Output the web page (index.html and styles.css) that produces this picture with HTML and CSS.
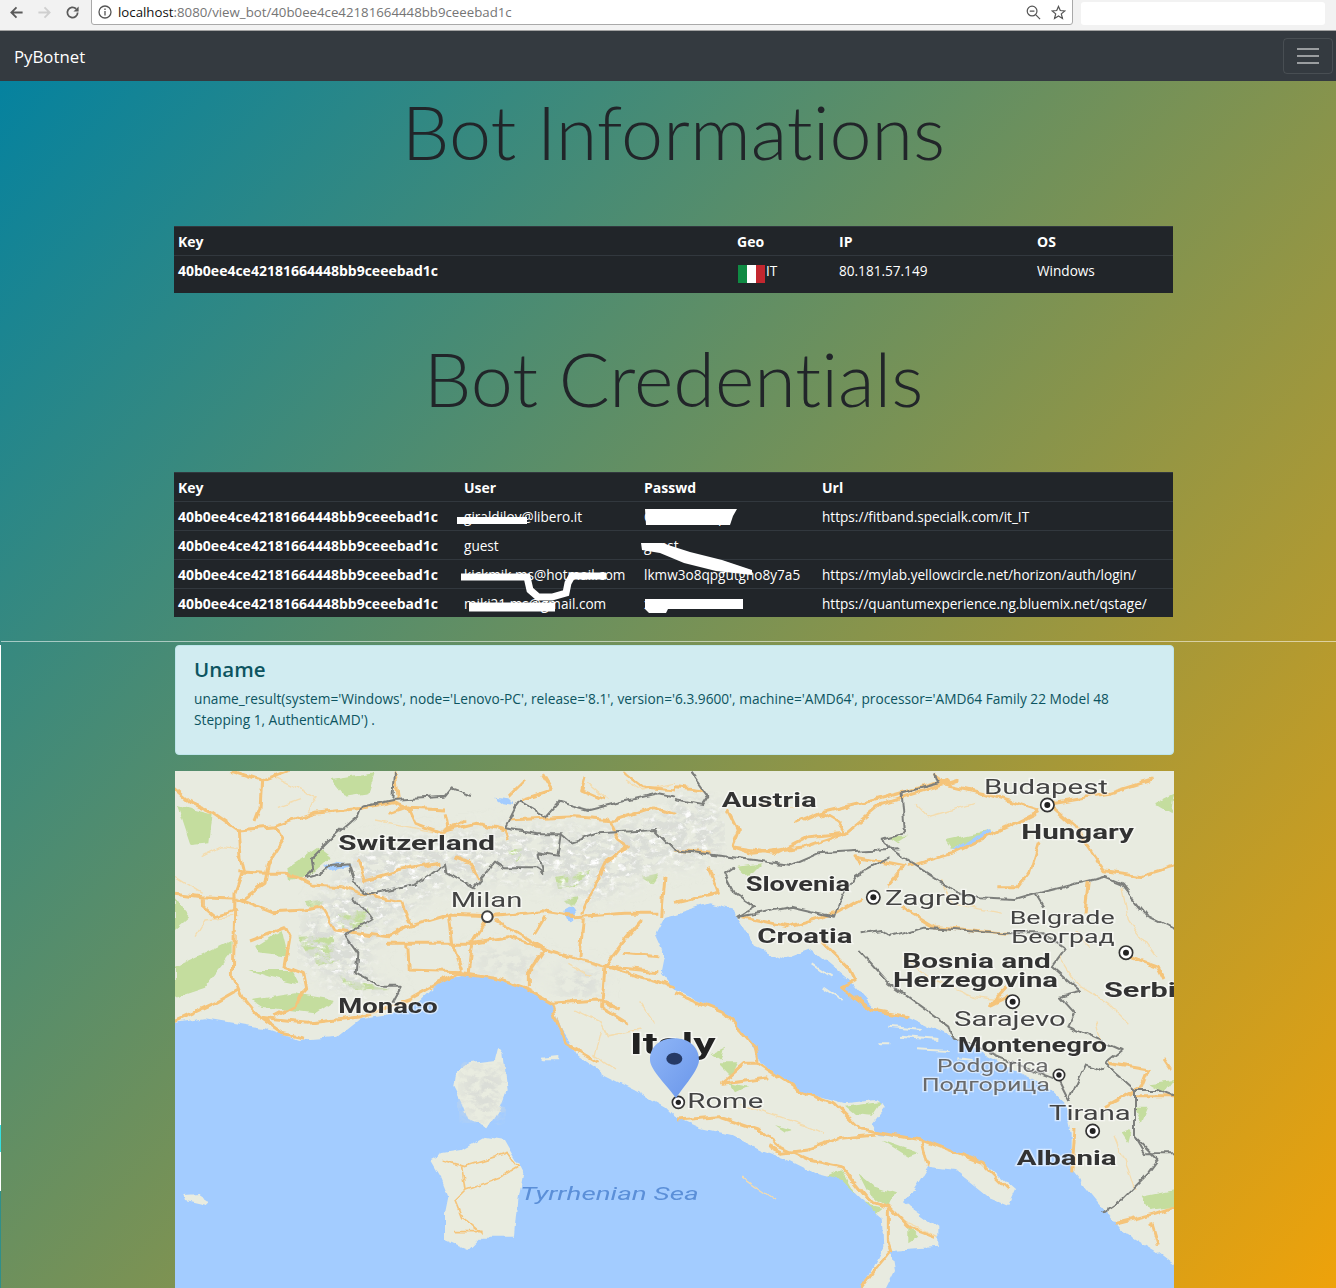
FILE: index.html
```html
<!DOCTYPE html>
<html lang="en">
<head>
<meta charset="utf-8">
<title>PyBotnet</title>
<link rel="stylesheet" href="styles.css">
</head>
<body>
<header class="chrome">
  <div class="nav-icons">
    <svg class="ic" viewBox="0 0 16 16"><path class="st-dark" d="M14.500 8H2.500M8 2.500 2.500 8 8 13.500"/></svg>
    <svg class="ic" viewBox="0 0 16 16"><path class="st-light" d="M1.500 8H13.500M8 2.500 13.500 8 8 13.500"/></svg>
    <svg class="ic" viewBox="0 0 16 16"><path class="st-dark" d="M13.500 8A5.500 5.500 0 1 1 11.800 4"/><path class="fill-dark" d="M14.500 1.500V7H9Z"/></svg>
  </div>
  <div class="urlbar">
    <svg class="ic-info" viewBox="0 0 14 14"><circle class="st-thin" cx="7" cy="7" r="6"/><path class="st-thin" d="M7 6V10.500M7 3.500V5"/></svg>
    <span class="url"><span class="host">localhost</span>:8080/view_bot/40b0ee4ce42181664448bb9ceeebad1c</span>
    <svg class="ic-end" viewBox="0 0 16 16"><circle class="st-thin" cx="6.500" cy="6.500" r="5.200"/><path class="st-thin" d="M4 6.500H9M10.500 10.500 15 15"/></svg>
    <svg class="ic-end" viewBox="0 0 16 16"><path class="st-thin" d="M8 1.500 9.900 5.900 14.700 6.300 11 9.500 12.200 14.300 8 11.700 3.800 14.300 5 9.500 1.300 6.300 6.100 5.900Z"/></svg>
  </div>
  <div class="profile-mask"></div>
</header>

<nav class="navbar">
  <a class="brand">PyBotnet</a>
  <button class="toggler" type="button" aria-label="Toggle navigation"><span></span><span></span><span></span></button>
</nav>

<main class="page">
  <div class="wrap">
    <h1 class="title">Bot Informations</h1>
    <table class="dark info">
      <thead><tr><th class="c1a">Key</th><th class="c1b">Geo</th><th class="c1c">IP</th><th class="c1d">OS</th></tr></thead>
      <tbody><tr class="tall"><th>40b0ee4ce42181664448bb9ceeebad1c</th><td><svg class="flag" viewBox="0 0 27 18"><rect class="fl-g" width="9" height="18"/><rect class="fl-w" x="9" width="9" height="18"/><rect class="fl-r" x="18" width="9" height="18"/></svg>IT</td><td>80.181.57.149</td><td>Windows</td></tr></tbody>
    </table>
    <h1 class="title second">Bot Credentials</h1>
    <div class="table-wrap">
      <table class="dark creds">
        <thead><tr><th class="c2a">Key</th><th class="c2b">User</th><th class="c2c">Passwd</th><th class="c2d">Url</th></tr></thead>
        <tbody>
          <tr><th>40b0ee4ce42181664448bb9ceeebad1c</th><td>giraldilov@libero.it</td><td>Gxxxxxxxxxp</td><td>https://fitband.specialk.com/it_IT</td></tr>
          <tr><th>40b0ee4ce42181664448bb9ceeebad1c</th><td>guest</td><td>guest</td><td></td></tr>
          <tr><th>40b0ee4ce42181664448bb9ceeebad1c</th><td>kickmik.ms@hotmail.com</td><td>lkmw3o8qpgutgho8y7a5</td><td>https://mylab.yellowcircle.net/horizon/auth/login/</td></tr>
          <tr><th>40b0ee4ce42181664448bb9ceeebad1c</th><td>miki21.ms@gmail.com</td><td>xxxxxxxxxxxx</td><td>https://quantumexperience.ng.bluemix.net/qstage/</td></tr>
        </tbody>
      </table>
      <svg class="scribbles" viewBox="174 472 999 145">
        <path class="sc w7" d="M457 520.500H527"/>
        <path class="sc-f" d="M645 509H737L733 516 730 525H646Z"/>
        <path class="sc-f" d="M641 543 662 543 690 552 722 560 752 570 752 575 716 571 684 563 660 553 642 550Z"/>
        <path class="sc w7" d="M461 577H527L530 590 538 597 552 597 566 593 568 583 572 576H606"/>
        <path class="sc w8" d="M469 607H555"/>
        <path class="sc-f" d="M645 599H743V609H668L666 613H649L645 609Z"/>
      </svg>
    </div>
  </div>
  <hr class="rule">
  <div class="lower">
    <div class="wrap">
      <section class="alert">
        <h4>Uname</h4>
        <p>uname_result(system='Windows', node='Lenovo-PC', release='8.1', version='6.3.9600', machine='AMD64', processor='AMD64 Family 22 Model 48 Stepping 1, AuthenticAMD') .</p>
      </section>
      <svg class="map" viewBox="0 3 2997 1551">
        <defs>
          <filter id="terrain" x="0" y="0" width="100%" height="100%">
            <feGaussianBlur in="SourceAlpha" stdDeviation="28" result="soft"/>
            <feTurbulence type="fractalNoise" baseFrequency=".03 .05" numOctaves="4" seed="4"/>
            <feColorMatrix type="matrix" values="0 0 0 0 .70  0 0 0 0 .72  0 0 0 0 .68  5 0 0 0 -1.900"/>
            <feComposite in2="soft" operator="in"/>
          </filter>
          <filter id="ridge" x="0" y="0" width="100%" height="100%">
            <feGaussianBlur in="SourceAlpha" stdDeviation="28" result="soft"/>
            <feTurbulence type="fractalNoise" baseFrequency=".04 .07" numOctaves="4" seed="19"/>
            <feColorMatrix type="matrix" values="0 0 0 0 1  0 0 0 0 1  0 0 0 0 1  4 0 0 0 -2.200"/>
            <feComposite in2="soft" operator="in"/>
          </filter>
          <filter id="wig" x="-3%" y="-3%" width="106%" height="106%">
            <feTurbulence type="fractalNoise" baseFrequency=".022" numOctaves="3" seed="7" result="n"/>
            <feDisplacementMap in="SourceGraphic" in2="n" scale="22" xChannelSelector="R" yChannelSelector="G"/>
            <feGaussianBlur stdDeviation="2.200"/>
          </filter>
          <linearGradient id="pinfill" x1="0" y1="0" x2="1" y2="1">
            <stop offset="0" stop-color="#8fb6f7"/><stop offset="1" stop-color="#6a96ea"/>
          </linearGradient>
        </defs>
        <rect class="land" y="0" width="3000" height="1560"/>
        <g filter="url(#wig)">
          <g class="green">
            <path d="M10 105 110 130 100 220 50 225Z"/><path d="M0 385 45 440 0 480Z"/><path d="M0 590 170 510 170 550 90 650 0 680Z"/>
            <path d="M340 290 430 230 470 260 400 320 345 330Z"/><path d="M470 30 600 10 580 70 510 80Z"/><path d="M240 530 320 480 340 560 250 550Z"/>
            <path d="M370 500 470 495 490 570 430 590Z"/><path d="M480 440 580 420 580 470 500 480Z"/><path d="M490 620 560 640 640 660 540 665Z"/>
            <path d="M230 690 360 670 480 690 420 730 260 710Z"/><path d="M220 600 350 600 370 640 280 620Z"/><path d="M390 400 450 390 420 420Z"/>
            <path d="M1140 320 1250 300 1220 340 1150 360Z"/><path d="M1170 390 1210 380 1190 410Z"/><path d="M990 240 1050 235 1020 280Z"/><path d="M1400 320 1450 310 1430 340Z"/>
            <path d="M1690 290 1760 280 1720 320Z"/><path d="M2140 200 2200 200 2170 220Z"/><path d="M2310 210 2450 180 2330 240Z"/><path d="M2940 100 3000 70 2990 130Z"/>
            <path d="M1610 850 1650 830 1640 870Z"/><path d="M1630 880 1690 880 1670 920Z"/><path d="M1660 940 1720 950 1680 970Z"/>
            <path d="M1800 1065 1850 1080 1830 1085Z"/><path d="M2120 1110 2230 1150 2200 1160Z"/><path d="M2010 1010 2120 995 2090 1040 2040 1035Z"/>
            <path d="M1940 1230 2000 1200 2040 1270 1970 1275 1920 1240Z"/><path d="M2050 1210 2100 1250 2160 1270 2140 1310 2080 1270Z"/><path d="M2070 1300 2120 1310 2090 1335Z"/>
            <path d="M2200 1370 2230 1400 2200 1420Z"/><path d="M2900 1280 3000 1260 3000 1310 2920 1320Z"/><path d="M2880 1010 2920 1010 2900 1060Z"/><path d="M2840 1090 2870 1080 2860 1120Z"/><path d="M2920 940 3000 930 2970 970Z"/>
          </g>
          <g filter="url(#terrain)">
            <path d="M560 230 800 200 1000 180 1300 180 1500 110 1500 260 1350 350 1250 400 1100 330 900 330 800 350 700 420 620 480 560 600 680 680 500 660 370 560 370 480 470 350 520 290Z"/>
            <path d="M900 540 1100 560 1060 620 900 590Z"/><path d="M1150 600 1280 600 1270 680 1150 680Z"/>
            <path d="M1500 60 1640 110 1650 240 1500 300Z"/>
          </g>
          <g filter="url(#ridge)">
            <path d="M560 230 800 200 1000 180 1300 180 1500 110 1500 260 1350 350 1250 400 1100 330 900 330 800 350 700 420 620 480 560 600 680 680 500 660 370 560 370 480 470 350 520 290Z"/>
            <path d="M1500 60 1640 110 1650 240 1500 300Z"/>
          </g>
          <g class="sea">
            <path d="M-20 762 90 745 180 760 270 775 370 810 490 800 560 745 660 730 740 690 800 630 880 610 960 625 1050 655 1130 700 1160 780 1210 860 1290 915 1380 960 1470 1010 1500 1040 1580 1075 1670 1095 1760 1140 1830 1165 1920 1210 2000 1230 2060 1290 2120 1340 2125 1430 2090 1500 2050 1580 -20 1580Z"/>
            <path d="M1440 495 1470 441 1600 400 1680 420 1690 450 1740 530 1830 570 1910 540 2030 640 2100 720 2200 740 2330 800 2440 860 2620 950 2670 1000 2690 1090 2690 1200 2780 1310 2840 1380 2940 1440 3020 1500 3020 1580 2120 1580 2160 1500 2150 1440 2290 1430 2290 1370 2190 1300 2260 1190 2340 1200 2440 1280 2500 1305 2520 1260 2440 1190 2240 1110 2110 1095 2090 1060 2130 1010 2100 990 2010 1000 1870 960 1760 880 1720 810 1650 730 1500 660 1460 610 1470 560Z"/>
            <path d="M1185 410a14 22 0 1 0 .1 0Z"/><path d="M2330 240 2440 180 2450 190 2350 240Z"/><path d="M960 80 1000 85 1020 105 985 100Z"/><path d="M440 295 490 275 530 285 470 300Z"/>
          </g>
          <g class="land-fill">
            <path d="M970 830 985 850 990 900 998 960 975 1020 940 1075 880 1050 860 1000 835 950 840 910 880 880 960 870Z"/>
            <path d="M930 1100 990 1110 1030 1180 1045 1210 1030 1290 1020 1400 920 1400 880 1440 810 1410 810 1330 820 1280 800 1230 765 1170 800 1150 860 1140Z"/>
            <path d="M25 1275 70 1272 105 1295 95 1305 30 1290Z"/><path d="M1100 860 1150 855 1150 868 1100 868Z"/>
          </g>
          <g filter="url(#terrain)"><path d="M850 900 990 880 990 980 940 1060 880 1040Z"/></g>
          <g class="isle">
            <path d="M1910 580 1970 620M1940 650 2000 690M2140 770 2240 780M2180 800 2290 810M2110 820 2140 820M2220 835 2330 840M2350 865 2390 870"/>
          </g>
          <g class="road-minor">
            <path d="M0 320 80 370M80 260 140 230 190 235M300 20 420 80 400 130M310 110 380 85M600 150 700 170 800 190M1240 40 1300 90M1350 30 1400 60 1500 40M60 500 90 450 190 440M1200 720 1280 760 1300 800 1400 780M1280 780 1260 860 1320 900M1400 700 1440 760M1180 580 1250 620M1700 1000 1900 1070 1950 1090M1720 100 1900 110M2220 100 2260 140 2400 100M2300 330 2330 400 2480 430M2700 480 2750 530M2650 560 2700 640 2800 700 2860 760M2760 760 2780 830M2180 560 2260 620 2400 680 2480 690M2840 350 2860 450 2940 560M1700 1220 1800 1290M2180 1350 2290 1400M2820 1100 2860 1200 2880 1260"/>
          </g>
          <g class="road">
            <path d="M0 55 45 95 110 125 190 180 195 260 205 300 180 370 175 620 200 680 250 740 320 790 390 805"/>
            <path d="M170 5 260 35 255 110 240 150M260 35 340 5M190 180 300 170 420 130 560 115 650 95 700 115 810 120M300 170 325 210 280 280 270 340 200 390"/>
            <path d="M0 370 80 380 190 385 290 425 390 420 440 410 480 480 640 500 700 470 820 435 940 440 1100 425 1200 440 1350 430 1450 430"/>
            <path d="M190 305 270 310 340 310 410 345 500 350 560 370 680 395 710 470M85 385 85 410 120 440 190 420M225 510 330 470 345 500 330 590 385 610 395 660 350 710 295 740M0 755 120 700 190 660"/>
            <path d="M250 745 400 760 560 740 700 690 790 640 850 610 960 625 1050 655 1130 700 1140 740 1170 820 1270 880"/>
            <path d="M820 435 830 520 860 600M940 440 890 520 880 610M630 520 760 520 880 520 1000 500 1100 535 1290 590 1500 650M960 450 1110 535 1060 610 1060 650M695 520 700 600 860 605M1110 440 1080 490M1225 445 1215 560M1290 590 1280 710 1360 760M1290 590 1350 510 1400 450M1300 590 1450 605M1340 550 1450 560M1130 700 1270 690 1340 720"/>
            <path d="M660 5 670 90M1100 10 1130 60 1040 90M1460 440 1470 320M1300 140 1330 210 1360 230 1290 280 1220 430M1000 150 1200 140 1320 150 1440 110M840 260 890 280 910 330M550 270 570 330 680 300 790 280M810 130 820 180 900 160 990 180 1000 210"/>
            <path d="M700 115 720 160 800 190 870 150M640 130 700 110M1050 30 1000 80M1230 20 1220 60 1290 90M1350 10 1400 50 1500 60M1440 110 1500 130"/>
            <path d="M1500 50 1590 60M1660 120 1690 180 1670 230 1800 250 1900 200 2010 190 2120 100 2350 30M1860 160 1930 130 2100 90 2320 30M2590 125 2500 170 2330 250 2200 290M2590 120 2430 70 2300 40 2280 10M2620 100 2700 170 2790 305 2900 320 3000 290M2590 215 2560 310 2530 350 2470 350M2620 100 2800 70 2930 30"/>
            <path d="M1500 240 1610 250M1600 290 1630 370 1500 400M1670 230 1730 250 1890 230 2010 190 1990 160 1940 130M2140 350 2190 290 2040 260 2060 280M2060 385 1980 430 1840 470 1700 440M2180 410 2280 470 2500 490M1940 510 2020 590 2040 630 2000 650 2090 720 2200 740"/>
            <path d="M1500 670 1650 730 1740 830 1750 880 1870 960 1980 1000 2060 1080 2240 1110 2420 1180 2500 1260M1750 880 1710 880 1640 940 1780 920M1510 1050 1630 1040 1750 1080 1810 1130 1900 1170 2000 1190 2080 1290 2140 1310 2140 1410 2150 1440 2100 1500 2060 1554M1900 1140 2000 1105 2100 1095M2240 1110 2260 1190M2500 680 2450 705 2500 650M2740 330 2730 430M2840 550 2950 590 2970 630M2700 1080 2690 1210M2820 1360 2940 1330 3000 1310M2930 1360 2950 1430M2970 870 2990 900M2800 880 2920 900 2900 950 2790 1010M2880 980 3000 980"/>
            <path d="M2140 1310 2200 1370 2280 1400M1780 1130 1820 1150 1900 1140"/>
          </g>
          <path class="road thin" d="M800 1170 870 1190 1000 1150 1030 1190 980 1220 870 1260 840 1290 860 1340 920 1390M860 1190 870 1260M840 1385 920 1385"/>
          <g class="border">
            <path d="M660 5 655 90 560 110 550 135 480 195 410 265 415 300 390 325 440 310 470 285 520 280 540 340 575 375 720 345 810 280 815 310 895 355 960 275 990 295 1085 295 1105 310 1090 250 1150 260 1160 190 1090 190 990 175 1020 115 1035 95 1110 140 1150 95 1240 120 1340 95 1450 70 1500 80"/>
            <path d="M655 90 810 80 830 55 885 75M1160 190 1190 215 1270 190 1440 180 1500 240M535 380 590 450 510 495 550 550 545 610 620 650 680 650 655 695"/>
            <path d="M1500 240 1850 285 1930 250 2170 235M1550 5 1600 75 1580 105 1500 90M2280 10 2290 40 2180 70 2190 190 2120 210 2150 240 2350 370 2410 385 2520 390 2590 370 2790 320 2840 340 2920 440 3000 480"/>
            <path d="M1680 290 1650 310 1680 370 1740 410 1690 440 1850 410 1980 440 2000 380 2040 320 2140 265M2060 490 2120 480 2150 500 2250 470 2500 490 2600 490 2670 535 2630 590 2715 665 2655 680 2700 730 2680 770 2840 840 2790 880 2880 960 2880 1100 2950 1170 2920 1210 2840 1290 2780 1330"/>
            <path d="M2050 540 2140 640 2320 770 2330 800 2520 880 2650 930 2680 990M2680 990 2730 880 2790 900M2880 960 2950 960 3000 980M2880 1100 2910 1150 3000 1150M2580 370 2605 410"/>
          </g>
        </g>
        <g class="labels">
          <text class="b" x="1640" y="112" textLength="285" lengthAdjust="spacingAndGlyphs">Austria</text>
          <text class="r" x="2427" y="72" textLength="372" lengthAdjust="spacingAndGlyphs">Budapest</text>
          <text class="b" x="2539" y="207" textLength="338" lengthAdjust="spacingAndGlyphs">Hungary</text>
          <text class="b" x="490" y="240" textLength="470" lengthAdjust="spacingAndGlyphs">Switzerland</text>
          <text class="r" x="827" y="410" textLength="215" lengthAdjust="spacingAndGlyphs">Milan</text>
          <text class="b" x="1712" y="362" textLength="313" lengthAdjust="spacingAndGlyphs">Slovenia</text>
          <text class="r" x="2130" y="405" textLength="275" lengthAdjust="spacingAndGlyphs">Zagreb</text>
          <text class="b" x="1747" y="518" textLength="285" lengthAdjust="spacingAndGlyphs">Croatia</text>
          <text class="r sm" x="2504" y="463" textLength="315" lengthAdjust="spacingAndGlyphs">Belgrade</text>
          <text class="r sm" x="2509" y="520" textLength="310" lengthAdjust="spacingAndGlyphs">Београд</text>
          <text class="b" x="2182" y="595" textLength="445" lengthAdjust="spacingAndGlyphs">Bosnia and</text>
          <text class="b" x="2154" y="651" textLength="495" lengthAdjust="spacingAndGlyphs">Herzegovina</text>
          <text class="b" x="2787" y="680" textLength="265" lengthAdjust="spacingAndGlyphs">Serbia</text>
          <text class="r" x="2337" y="768" textLength="335" lengthAdjust="spacingAndGlyphs">Sarajevo</text>
          <text class="b" x="2348" y="847" textLength="448" lengthAdjust="spacingAndGlyphs">Montenegro</text>
          <text class="r sm grey" x="2286" y="907" textLength="335" lengthAdjust="spacingAndGlyphs">Podgorica</text>
          <text class="r sm grey" x="2240" y="963" textLength="385" lengthAdjust="spacingAndGlyphs">Подгорица</text>
          <text class="r" x="2622" y="1050" textLength="245" lengthAdjust="spacingAndGlyphs">Tirana</text>
          <text class="b" x="2525" y="1185" textLength="300" lengthAdjust="spacingAndGlyphs">Albania</text>
          <text class="r" x="1537" y="1015" textLength="228" lengthAdjust="spacingAndGlyphs">Rome</text>
          <text class="b" x="490" y="730" textLength="298" lengthAdjust="spacingAndGlyphs">Monaco</text>
          <text class="country" x="1364" y="853" textLength="258" lengthAdjust="spacingAndGlyphs">Italy</text>
          <text class="seaname" x="1036" y="1290" textLength="535" lengthAdjust="spacingAndGlyphs">Tyrrhenian Sea</text>
        </g>
        <g>
          <circle class="hollow" cx="937" cy="440" r="16"/>
          <g class="city">
            <circle cx="2617" cy="105" r="20"/><circle cx="2095" cy="382" r="20"/><circle cx="2513" cy="695" r="20"/><circle cx="2853" cy="548" r="20"/><circle cx="2652" cy="915" r="17"/><circle cx="2753" cy="1083" r="20"/><circle cx="1510" cy="997" r="18"/>
          </g>
          <g class="citydot">
            <circle cx="2617" cy="105" r="9"/><circle cx="2095" cy="382" r="9"/><circle cx="2513" cy="695" r="9"/><circle cx="2853" cy="548" r="9"/><circle cx="2652" cy="915" r="8"/><circle cx="2753" cy="1083" r="9"/><circle cx="1510" cy="997" r="8"/>
          </g>
          <path class="pin" d="M1503 985C1480 950 1425 900 1425 870 1425 825 1460 805 1498 805 1540 805 1572 830 1572 870 1572 900 1525 950 1503 985Z"/>
          <ellipse class="pindot" cx="1498" cy="866" rx="24" ry="18"/>
        </g>
      </svg>
    </div>
  </div>
</main>
</body>
</html>
```
FILE: styles.css
```css
* { box-sizing: border-box; }
html, body { margin: 0; height: 1288px; overflow: hidden; }
body { font-family: "Open Sans", "Noto Sans", sans-serif; font-size: 13.6px; line-height: 21.6px; color: #212529; }

.chrome { height: 31px; background: #f2f2f2; border-bottom: 1px solid #a3a3a3; display: flex; align-items: flex-start; }
.nav-icons { width: 91px; height: 25px; padding: 5px 0 0 9px; display: flex; gap: 13px; }
.ic { width: 15px; height: 15px; }
.st-dark { fill: none; stroke: #5a5a5a; stroke-width: 1.9; }
.st-light { fill: none; stroke: #cfcfcf; stroke-width: 1.9; }
.fill-dark { fill: #5a5a5a; }
.st-thin { fill: none; stroke: #555; stroke-width: 1.3; }
.urlbar { width: 982px; height: 26px; margin-top: -1px; background: #fff; border: 1px solid #a9a9a9; border-radius: 0 0 3px 3px; display: flex; align-items: center; padding: 0 6px; }
.ic-info { width: 14px; height: 14px; flex: none; }
.url { margin-left: 6px; padding-top: 1px; flex: 1; font-size: 13.25px; color: #757575; white-space: nowrap; }
.host { color: #111; }
.ic-end { width: 15px; height: 15px; margin-left: 10px; flex: none; }
.profile-mask { width: 244px; height: 23px; margin: 2px 0 0 8px; background: #fff; border-radius: 3px; }

.navbar { height: 50px; background: #343a40; display: flex; align-items: center; justify-content: space-between; padding: 0 3px 0 14px; }
.brand { color: #fff; font-size: 16.8px; line-height: 26px; padding-top: 1px; }
.toggler { width: 50px; height: 36px; background: transparent; border: 1px solid rgba(255,255,255,.1); border-radius: 4px; padding: 0; display: flex; flex-direction: column; align-items: center; justify-content: center; gap: 5px; }
.toggler span { display: block; width: 22px; height: 2px; background: rgba(255,255,255,.5); }

.page { height: 1207px; overflow: hidden; background: linear-gradient(132deg, #05829f, #eea20a); }
.wrap { width: 999px; margin-left: 174px; }
.title { margin: 2px 0 48px; text-align: center; font-family: Lato, "Open Sans", sans-serif; font-weight: 300; font-size: 75.5px; line-height: 95px; font-variant-ligatures: none; color: #212529; }
.title.second { margin: 37px 0 47px; }

.dark { width: 999px; table-layout: fixed; border-collapse: separate; border-spacing: 0; background: #212529; color: #fff; }
.dark th, .dark td { text-align: left; vertical-align: top; padding: 4px 4px 2.4px; border-top: 1px solid #32383e; font-weight: 400; white-space: nowrap; overflow: hidden; }
.dark th { font-weight: 700; font-size: 14px; }
.dark .tall th, .dark .tall td { height: 38px; }
.c1a { width: 559px; } .c1b { width: 102px; } .c1c { width: 198px; } .c1d { width: 140px; }
.c2a { width: 286px; } .c2b { width: 180px; } .c2c { width: 178px; } .c2d { width: 355px; }
.flag { width: 27px; height: 18px; vertical-align: top; margin: 5px 1px -4px 1px; }
.fl-g { fill: #0f8a43; } .fl-w { fill: #fff; } .fl-r { fill: #c3272f; }

.table-wrap { position: relative; height: 145px; }
.scribbles { position: absolute; left: 0; top: 0; width: 999px; height: 145px; }
.sc { fill: none; stroke: #fff; }
.sc-f { fill: #fff; }
.w7 { stroke-width: 7; } .w8 { stroke-width: 9; }

.rule { height: 1px; margin: 24px 0 3px 1px; border: 0; background: rgba(255,255,255,.55); }
.lower { border-left: 1px solid #fff; border-image: linear-gradient(to bottom, #fff 0, #fff 480px, #35dfe0 480px, #35dfe0 507px, #fff 507px, #fff 545px, #2f8f8a 545px) 1; height: 700px; }
.alert { height: 110px; margin-bottom: 16px; padding: 10px 18px; background: #d1ecf1; border: 1px solid #bee5eb; border-radius: 4px; color: #0c5460; }
.alert h4 { margin: 0 0 6px; font-size: 20.5px; line-height: 26px; font-weight: 600; }
.alert p { margin: 0; font-size: 13.7px; line-height: 21px; }

.map { display: block; width: 999px; height: 517px; }
.land { fill: #e8ebe0; }
.green path { fill: #c4dd9e; }
.sea path { fill: #a3ccff; }
.land-fill path { fill: #e9ece0; }
.isle path { fill: none; stroke: #e9ece0; stroke-width: 6; }
.road path, .road.thin { fill: none; stroke: #f5c47a; stroke-width: 9; stroke-linejoin: round; }
.road.thin { stroke-width: 5; }
.road-minor path { fill: none; stroke: #f4dcae; stroke-width: 4; }
.border path { fill: none; stroke: #7d7f7c; stroke-width: 6; stroke-linejoin: round; }
.labels { filter: blur(.35px); }
.labels text { font-family: Roboto, "Liberation Sans", sans-serif; fill: #3a3a3a; paint-order: stroke; stroke: rgba(255,255,255,.55); stroke-width: 7px; }
.labels .b { font-weight: 700; font-size: 58px; fill: #333; }
.labels .r { font-weight: 400; font-size: 60px; fill: #444; }
.labels .sm { font-size: 54px; }
.labels .grey { fill: #6a6a6a; }
.labels .country { font-weight: 700; font-size: 86px; fill: #222; }
.labels .seaname { font-style: italic; font-size: 54px; fill: #5b8fd8; stroke: none; }
.hollow { fill: #fff; stroke: #444; stroke-width: 6; }
.city circle { fill: #fff; stroke: #333; stroke-width: 5; }
.citydot circle { fill: #222; }
.pin { fill: url(#pinfill); }
.pindot { fill: #263a66; }
```
